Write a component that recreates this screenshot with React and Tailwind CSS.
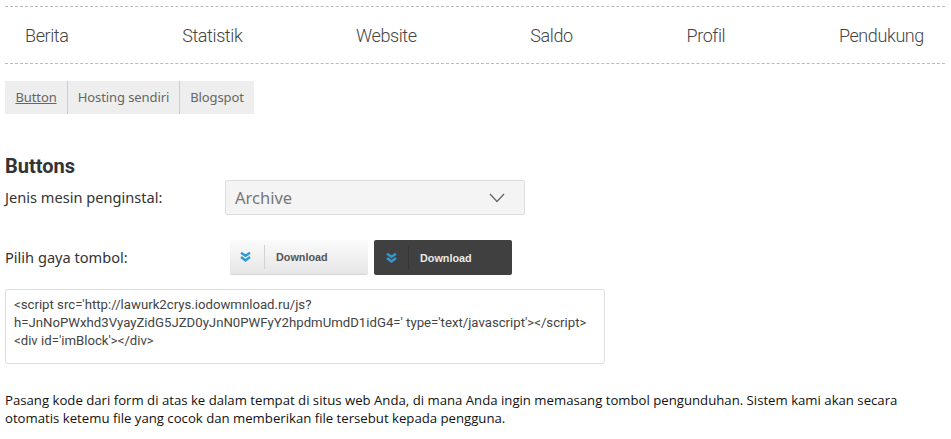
import React from "react";

const Chevrons = () => (
  <svg width="11" height="10" viewBox="0 0 11 10" fill="none" stroke="#2f9bd6" strokeWidth="2.5">
    <path d="M1 0.8 L5.5 3.8 L10 0.8" />
    <path d="M1 5 L5.5 8.4 L10 5" />
  </svg>
);

function DlButton({ dark }) {
  return (
    <div
      className={
        dark
          ? "flex h-[35px] w-[138px] items-center rounded-[2px] bg-[#404040]"
          : "flex h-[35px] w-[138px] items-center rounded-[2px] border-b border-[#d4d4d4] bg-gradient-to-b from-[#fbfbfb] to-[#e6e6e6]"
      }
    >
      <div className={dark ? "ml-[12px] flex w-[12px] shrink-0" : "ml-[10px] flex w-[12px] shrink-0"}><Chevrons /></div>
      <div className={dark ? "ml-[10px] h-[24px] w-px bg-[#363636]" : "ml-[12px] h-[24px] w-px bg-[#d2d2d2]"} />
      <span
        className={
          dark
            ? "ml-[11px] pt-[1px] font-['Liberation_Sans',sans-serif] text-[10.8px] font-bold text-[#e8e8e8]"
            : "ml-[11px] pt-[1px] font-['Liberation_Sans',sans-serif] text-[10.8px] font-bold text-[#555555]"
        }
      >
        Download
      </span>
    </div>
  );
}

export default function App() {
  return (
    <div className="h-[439px] w-[951px] overflow-hidden bg-white px-[5px] pt-[6px] font-['Noto_Sans',sans-serif] text-[#333333]">
      <nav className="flex h-[58px] w-[940px] items-center justify-between border-y border-dashed border-[#bbbbbb] pl-[20px] pr-[21px] font-['Roboto',sans-serif] text-[18px] font-light tracking-[-0.4px] text-[#444444]">
        <span>Berita</span>
        <span>Statistik</span>
        <span>Website</span>
        <span>Saldo</span>
        <span>Profil</span>
        <span>Pendukung</span>
      </nav>

      <div className="mt-[17px] flex h-[33px] w-[249px] items-center bg-[#eeeeee] text-[13px] tracking-[-0.1px] text-[#666666]">
        <span className="flex h-full w-[63px] items-center justify-center border-r border-[#cccccc]"><span className="underline">Button</span></span>
        <span className="flex h-full w-[112px] items-center justify-center border-r border-[#cccccc]">Hosting sendiri</span>
        <span className="flex h-full flex-1 items-center justify-center">Blogspot</span>
      </div>

      <h1 className="mt-[38px] font-['Roboto',sans-serif] text-[20px] leading-[28px] font-bold text-[#333333]">Buttons</h1>

      <div className="flex items-center">
        <span className="w-[220px] text-[14.6px]">Jenis mesin penginstal:</span>
        <div className="flex h-[35px] w-[300px] items-center justify-between rounded-[2px] border border-[#dddddd] bg-[#f4f4f4] pl-[9px] pr-[19px] text-[16.5px] text-[#777777]">
          <span className="pt-[1px]">Archive</span>
          <svg width="16" height="10" viewBox="0 0 16 10" fill="none" stroke="#666666" strokeWidth="1.3">
            <path d="M1 1 L8 8.5 L15 1" />
          </svg>
        </div>
      </div>

      <div className="mt-[25px] flex items-center">
        <span className="w-[225px] text-[14.6px]">Pilih gaya tombol:</span>
        <div className="flex gap-[6px]">
          <DlButton />
          <DlButton dark />
        </div>
      </div>

      <div className="mt-[14px] h-[75px] w-[600px] rounded-[3px] border border-[#dddddd] px-[8px] py-[6px] font-['Roboto',sans-serif] text-[13.2px] leading-[18px] text-[#444444]">
        <div>&lt;script src='http://lawurk2crys.iodowmnload.ru/js?</div>
        <div>h=JnNoPWxhd3VyayZidG5JZD0yJnN0PWFyY2hpdmUmdD1idG4=' type='text/javascript'&gt;&lt;/script&gt;</div>
        <div>&lt;div id='imBlock'&gt;&lt;/div&gt;</div>
      </div>

      <p className="mt-[27px] w-[930px] font-['Open_Sans',sans-serif] text-[13.18px] leading-[18px] text-[#111111]">
        Pasang kode dari form di atas ke dalam tempat di situs web Anda, di mana Anda ingin memasang tombol pengunduhan. Sistem kami akan secara otomatis ketemu file yang cocok dan memberikan file tersebut kepada pengguna.
      </p>
    </div>
  );
}
